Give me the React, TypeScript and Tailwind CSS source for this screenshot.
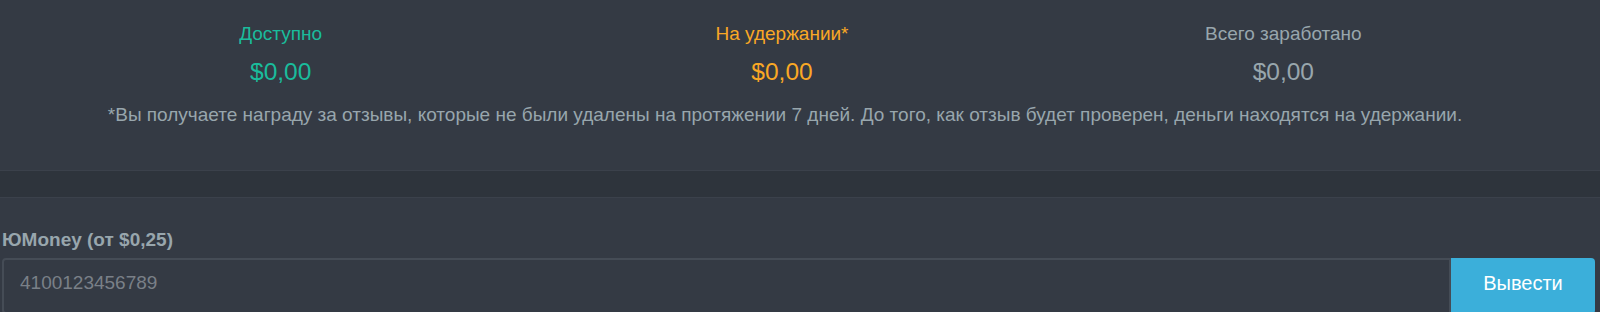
export default function App() {
  const stats = [
    { label: "Доступно", value: "$0,00", color: "text-[#1abc9c]" },
    { label: "На удержании*", value: "$0,00", color: "text-[#f9a825]" },
    { label: "Всего заработано", value: "$0,00", color: "text-[#98a6ad]" },
  ];

  return (
    <div className="w-[1600px] h-[312px] overflow-hidden bg-[#343a44] font-['Liberation_Sans',Arial,sans-serif]">
      <div className="h-[171px] pl-[30px] pr-[60px] pt-[23px] border-b border-[#3b414b]">
        <div className="grid grid-cols-3 pr-[6px]">
          {stats.map((s) => (
            <div key={s.label} className={`text-center ${s.color}`}>
              <div className="text-[19px] leading-[22px]">{s.label}</div>
              <div className="text-[24.5px] leading-[28px] mt-[13px]">{s.value}</div>
            </div>
          ))}
        </div>
        <p className="text-center text-[19px] leading-[22px] text-[#98a6ad] mt-[18px]">
          *Вы получаете награду за отзывы, которые не были удалены на протяжении 7 дней. До того, как отзыв будет проверен, деньги находятся на удержании.
        </p>
      </div>
      <div className="h-[27px] bg-[#2e343c] border-b border-[#3b414b]" />
      <div className="pl-[2px] pr-[5px] pt-[31px]">
        <label className="block text-[19px] leading-[22px] font-bold text-[#98a6ad] mb-[7px]">
          ЮMoney (от $0,25)
        </label>
        <div className="flex">
          <input
            className="flex-1 h-[56px] bg-[#343a44] border-2 border-[#454c56] rounded-l-[4px] px-[16px] pb-[6px] text-[19px] text-[#98a6ad] placeholder:text-[#7a8088] outline-none"
            placeholder="4100123456789"
          />
          <button className="w-[144px] h-[56px] bg-[#3bafda] text-white text-[20px] rounded-r-[4px] pb-[6px]">
            Вывести
          </button>
        </div>
      </div>
    </div>
  );
}
